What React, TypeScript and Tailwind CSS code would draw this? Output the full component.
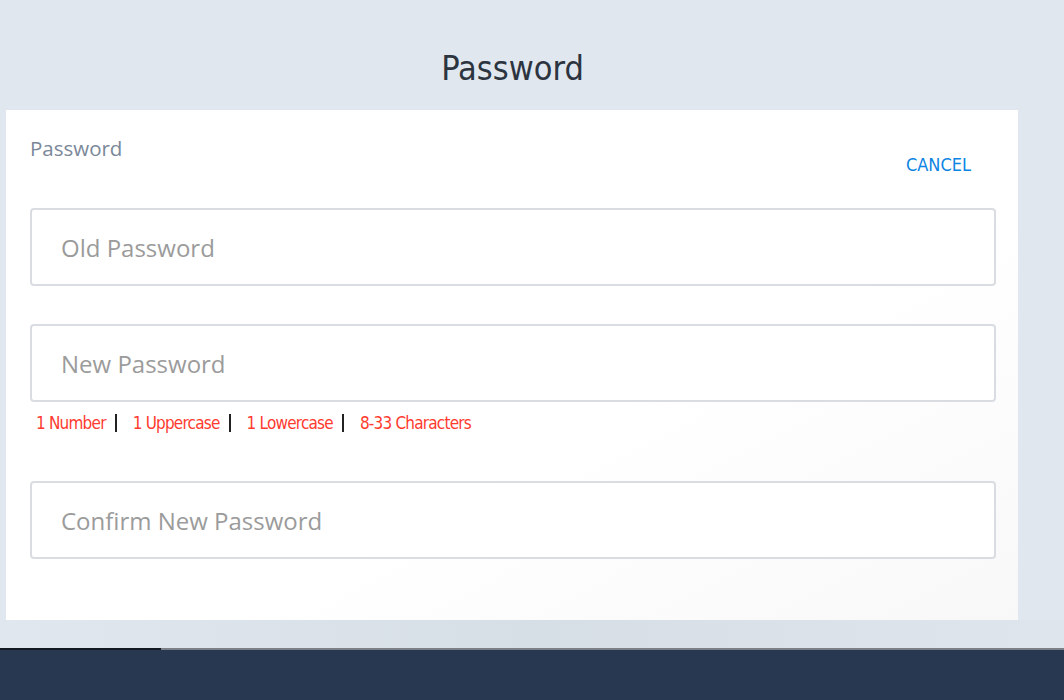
import React from 'react';

const condensed = { fontFamily: '"DejaVu Sans Condensed", "Roboto", sans-serif' };
const openSans = { fontFamily: '"Open Sans", "Noto Sans", sans-serif' };

const PasswordField: React.FC<{ placeholder: string }> = ({ placeholder }) => (
  <input
    type="password"
    placeholder={placeholder}
    className="w-full h-[78px] border-2 border-[#d9dde2] rounded-[4px] pl-[29px] text-[24px] text-[#555] placeholder:text-[#9b9b9b] outline-none bg-white"
    style={openSans}
  />
);

const rules = ['1 Number', '1 Uppercase', '1 Lowercase', '8-33 Characters'];

export default function App() {
  return (
    <div className="min-h-[700px] bg-[#e0e7ef] flex flex-col">
      {/* Title */}
      <div className="h-[110px] flex items-start justify-center pt-[47px]">
        <h1 className="text-[34px] leading-[42px] text-[#2c3440] ml-[-39px]" style={condensed}>
          Password
        </h1>
      </div>

      {/* Card */}
      <div className="ml-[6px] w-[1012px] h-[510px] bg-gradient-to-br from-white from-60% to-[#f8f8f8] pl-[24px] pr-[22px] pt-[25px]">
        <div className="flex justify-between">
          <div className="text-[20.5px] leading-[26px] text-[#7a8899]" style={openSans}>
            Password
          </div>
          <button className="mt-[18px] mr-[25px] text-[18px] leading-[24px] text-[#0b84e3]" style={condensed}>
            CANCEL
          </button>
        </div>

        <div className="mt-[31px]">
          <PasswordField placeholder="Old Password" />
        </div>

        <div className="mt-[38px]">
          <PasswordField placeholder="New Password" />
          <div className="flex items-center mt-[10px] pl-[6px] text-[17px] leading-[22px] tracking-[-0.8px] text-[#ff3b30]" style={condensed}>
            {rules.map((r, i) => (
              <React.Fragment key={r}>
                {i > 0 && <span className="ml-[9px] mr-[16px] w-[2px] h-[18px] bg-[#222]"></span>}
                <span>{r}</span>
              </React.Fragment>
            ))}
          </div>
        </div>

        <div className="mt-[47px]">
          <PasswordField placeholder="Confirm New Password" />
        </div>
      </div>

      <div className="h-[28px] bg-gradient-to-r from-[#e0e7ef] via-[#d6dee6] to-[#dfe5ec]"></div>

      {/* Footer bar */}
      <div className="flex h-[2px]">
        <div className="w-[161px] bg-[#141a22]"></div>
        <div className="flex-1 bg-[#7c8086]"></div>
      </div>
      <div className="flex-1 min-h-[50px] bg-[#273850]"></div>
    </div>
  );
}
